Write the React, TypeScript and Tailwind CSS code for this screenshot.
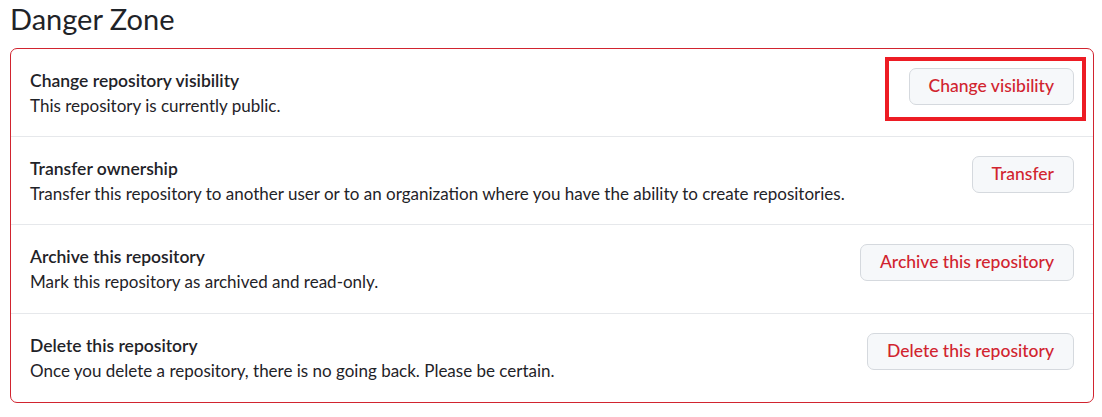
import React from 'react';

const rows = [
  {
    title: 'Change repository visibility',
    description: 'This repository is currently public.',
    action: 'Change visibility',
    highlight: true,
  },
  {
    title: 'Transfer ownership',
    description:
      'Transfer this repository to another user or to an organization where you have the ability to create repositories.',
    action: 'Transfer',
  },
  {
    title: 'Archive this repository',
    description: 'Mark this repository as archived and read-only.',
    action: 'Archive this repository',
  },
  {
    title: 'Delete this repository',
    description: 'Once you delete a repository, there is no going back. Please be certain.',
    action: 'Delete this repository',
  },
];

export default function App() {
  return (
    <div
      className="min-h-[417px] bg-white pl-[10px] pr-[8px] text-[#1f2328]"
      style={{ fontFamily: 'Lato, "Noto Sans", sans-serif' }}
    >
      <h2 className="pt-[0px] text-[29px] leading-[37px] font-normal">Danger Zone</h2>
      <div className="mt-[11px] rounded-[7px] border border-[#d1242f]">
        {rows.map((r, i) => (
          <div
            key={r.title}
            className={`flex items-start justify-between px-[19px] pt-[19px] ${i < 2 ? 'pb-[18px]' : 'pb-[19px]'} ${i > 0 ? 'border-t border-[#e6e8eb]' : ''}`}
          >
            <div>
              <div className="text-[17.5px] leading-[25px] font-semibold">{r.title}</div>
              <div className="text-[17px] leading-[25px]">{r.description}</div>
            </div>
            <div className="relative">
              <button className="h-[37px] rounded-[7px] border border-[#d5d9de] bg-[#f6f8fa] px-[19px] text-[17.5px] font-medium text-[#d1242f]">
                {r.action}
              </button>
              {r.highlight && (
                <div className="pointer-events-none absolute -left-[24px] -right-[12px] -top-[11px] -bottom-[16px] border-4 border-[#ed1c24]" />
              )}
            </div>
          </div>
        ))}
      </div>
    </div>
  );
}
